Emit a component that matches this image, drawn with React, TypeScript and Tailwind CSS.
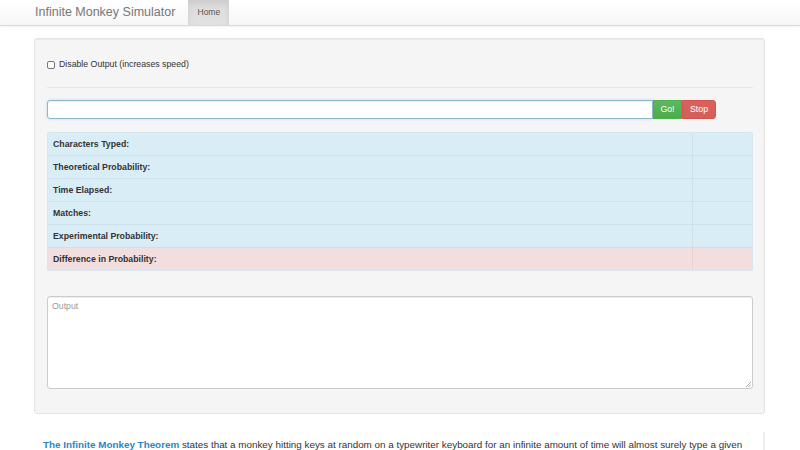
import React from "react";

const rows: { label: string; danger?: boolean }[] = [
  { label: "Characters Typed:" },
  { label: "Theoretical Probability:" },
  { label: "Time Elapsed:" },
  { label: "Matches:" },
  { label: "Experimental Probability:" },
  { label: "Difference in Probability:", danger: true },
];

export default function App() {
  return (
    <div
      className="w-[800px] h-[450px] overflow-hidden bg-white text-[#333]"
      style={{ fontFamily: '"Liberation Sans", Arial, Helvetica, sans-serif' }}
    >
      {/* Navbar */}
      <div className="h-[26px] bg-gradient-to-b from-white to-[#f6f6f6] border-b border-[#dadada] shadow-[0_1px_2px_rgba(0,0,0,0.06)] flex items-stretch pl-[35px]">
        <div className="flex items-center text-[12.5px] text-[#777] pr-[13px]">
          Infinite Monkey Simulator
        </div>
        <div className="w-[41px] flex items-center justify-center text-[8.5px] text-[#555] bg-gradient-to-b from-[#dbdbdb] to-[#e2e2e2] shadow-[inset_0_3px_6px_rgba(0,0,0,0.08)]">
          Home
        </div>
      </div>

      {/* Main */}
      <div className="pl-[34px] pr-[35px] pt-[12px]">
        <div className="border border-[#e3e3e3] rounded-[3px] bg-[#f5f5f5] shadow-[inset_0_1px_1px_rgba(0,0,0,0.05)] pl-[12px] pr-[11px] pt-[19px] pb-[24px]">
          <label className="flex items-center h-[14px] text-[8.75px] text-[#333]">
            <span className="w-[8px] h-[8px] border border-[#777] rounded-[2px] bg-white mr-[4px]" />
            Disable Output (increases speed)
          </label>
          <div className="mt-[15px] border-t border-[#e6e6e6]" />

          <div className="mt-[12px] flex h-[19px] pr-[37px]">
            <div className="flex-1 bg-white border border-[#8fb6cf] rounded-l-[3px] shadow-[inset_0_1px_1px_rgba(0,0,0,0.075),0_0_3px_rgba(102,175,233,0.4)]" />
            <div className="w-[29px] flex items-center justify-center text-white text-[8.75px] bg-gradient-to-b from-[#5cb85c] to-[#4cac4c] border border-[#4cae4c]">
              Go!
            </div>
            <div className="w-[34px] flex items-center justify-center text-white text-[8.75px] bg-gradient-to-b from-[#dc605b] to-[#d15f5a] border border-[#d2534f] rounded-r-[3px]">
              Stop
            </div>
          </div>

          <div className="mt-[13px] border border-[#d6e6ee] rounded-[2px] overflow-hidden">
            {rows.map((r, i) => (
              <div
                key={r.label}
                className={`flex ${i > 0 ? "h-[23px] border-t" : "h-[22px]"} ${
                  r.danger ? "bg-[#f2dede] border-[#ead4d4]" : "bg-[#d9edf7] border-[#cde2ec]"
                }`}
              >
                <div
                  className={`flex-1 flex items-center pl-[5px] pt-[1px] text-[8.75px] font-bold text-[#333] border-r ${
                    r.danger ? "border-[#e8d3d3]" : "border-[#cfe2eb]"
                  }`}
                >
                  {r.label}
                </div>
                <div className="w-[59px]" />
              </div>
            ))}
          </div>

          <div className="mt-[25px] h-[93px] bg-white border border-[#ccc] rounded-[3px] shadow-[inset_0_1px_1px_rgba(0,0,0,0.075)] relative">
            <div className="pl-[4px] pt-[3px] text-[8.75px] text-[#999]">Output</div>
            <svg
              className="absolute right-[1px] bottom-[1px]"
              width="6"
              height="6"
              viewBox="0 0 6 6"
            >
              <line x1="1" y1="6" x2="6" y2="1" stroke="#999" strokeWidth="0.8" />
              <line x1="3.5" y1="6" x2="6" y2="3.5" stroke="#999" strokeWidth="0.8" />
            </svg>
          </div>
        </div>

        <div className="flex mt-[22px]">
          <p className="flex-1 pl-[9px] pt-[2px] text-[9.85px] leading-[14px] text-[#333] whitespace-nowrap overflow-hidden">
            <a className="font-bold text-[#2a86c2]">The Infinite Monkey Theorem</a> states that a monkey hitting keys at random on a typewriter keyboard for an infinite amount of time will almost surely type a given
          </p>
          <div className="w-[2px] h-[30px] bg-[#eee] ml-[10px] mt-[-4px]" />
        </div>
      </div>
    </div>
  );
}
